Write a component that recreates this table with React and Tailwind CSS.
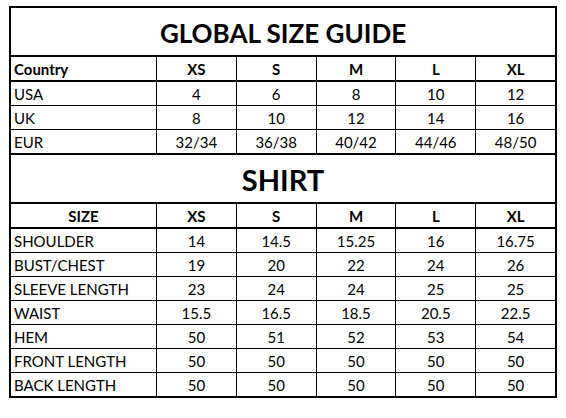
import React from 'react';

const sizes = ['XS', 'S', 'M', 'L', 'XL'];

const countries = [
  ['USA', '4', '6', '8', '10', '12'],
  ['UK', '8', '10', '12', '14', '16'],
  ['EUR', '32/34', '36/38', '40/42', '44/46', '48/50'],
];

const shirt = [
  ['SHOULDER', '14', '14.5', '15.25', '16', '16.75'],
  ['BUST/CHEST', '19', '20', '22', '24', '26'],
  ['SLEEVE LENGTH', '23', '24', '24', '25', '25'],
  ['WAIST', '15.5', '16.5', '18.5', '20.5', '22.5'],
  ['HEM', '50', '51', '52', '53', '54'],
  ['FRONT LENGTH', '50', '50', '50', '50', '50'],
  ['BACK LENGTH', '50', '50', '50', '50', '50'],
];

function Row({ cells, bold, firstCenter, border }) {
  return (
    <div className={`grid grid-cols-[145px_repeat(5,1fr)] ${border}`}>
      {cells.map((c, i) => (
        <div
          key={i}
          className={`flex items-center pt-[2px] ${i === 0 ? (firstCenter ? 'justify-center' : 'pl-[3px]') : 'justify-center border-l border-black'} ${bold ? 'font-bold' : ''}`}
        >
          {c}
        </div>
      ))}
    </div>
  );
}

export default function App() {
  return (
    <div className="min-h-screen bg-white pl-[9px] pt-[6px]" style={{ fontFamily: 'Lato, "Open Sans", sans-serif' }}>
      <div className="w-[548px] border-2 border-black text-[15px] leading-none text-black">
        <div className="h-[49px] flex items-center justify-center pt-[3px] border-b-2 border-black text-[26px] font-bold">
          GLOBAL SIZE GUIDE
        </div>
        <Row cells={['Country', ...sizes]} bold border="h-[25px] border-b-2 border-black" />
        {countries.map((r, i) => (
          <Row
            key={r[0]}
            cells={r}
            border={i === countries.length - 1 ? 'h-[25px] border-b-2 border-black' : 'h-[24px] border-b border-black'}
          />
        ))}
        <div className="h-[49px] flex items-center justify-center pt-[1px] border-b-2 border-black text-[29px] font-bold">
          SHIRT
        </div>
        <Row cells={['SIZE', ...sizes]} bold firstCenter border="h-[25px] border-b-2 border-black" />
        {shirt.map((r, i) => (
          <Row
            key={r[0]}
            cells={r}
            border={i === shirt.length - 1 ? 'h-[23px]' : 'h-[24px] border-b border-black'}
          />
        ))}
      </div>
    </div>
  );
}
